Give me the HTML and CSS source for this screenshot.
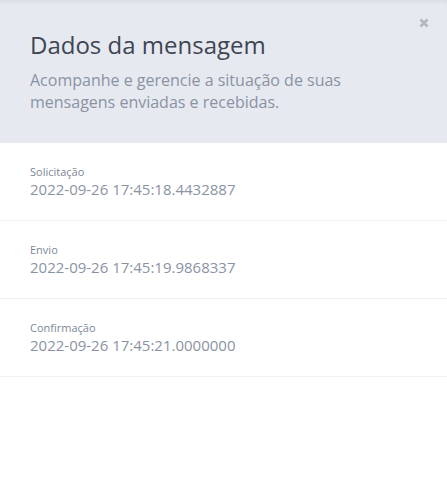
FILE: index.html
```html
<!DOCTYPE html>
<html lang="pt-BR">
<head>
<meta charset="utf-8">
<title>Dados da mensagem</title>
<link rel="stylesheet" href="styles.css">
</head>
<body>
<div class="panel">
  <header class="header">
    <button class="close" aria-label="Fechar">
      <svg width="10" height="10" viewBox="0 0 10 10"><path d="M1.5 1.5 L8.5 8.5 M8.5 1.5 L1.5 8.5" stroke="#b2b6bf" stroke-width="2.6" stroke-linecap="butt"/></svg>
    </button>
    <h1 class="title">Dados da mensagem</h1>
    <p class="subtitle">Acompanhe e gerencie a situação de suas mensagens enviadas e recebidas.</p>
  </header>
  <div class="rows">
    <div class="row">
      <div class="label">Solicitação</div>
      <div class="value">2022-09-26 17:45:18.4432887</div>
    </div>
    <div class="row">
      <div class="label">Envio</div>
      <div class="value">2022-09-26 17:45:19.9868337</div>
    </div>
    <div class="row">
      <div class="label">Confirmação</div>
      <div class="value">2022-09-26 17:45:21.0000000</div>
    </div>
  </div>
</div>
</body>
</html>
```
FILE: styles.css
```css
* { box-sizing: border-box; }
html, body { margin: 0; padding: 0; background: #fff; }
body { font-family: "Open Sans", "Noto Sans", sans-serif; }
.panel { width: 447px; min-height: 483px; background: #fff; }
.header {
  position: relative;
  background: #e6e9f0;
  padding: 29px 30px 29px 30px;
  box-shadow: inset 0 4px 4px -2px rgba(0,0,0,0.06);
}
.close {
  position: absolute;
  top: 18px;
  right: 18px;
  border: 0;
  background: transparent;
  padding: 0;
  width: 10px;
  height: 10px;
  line-height: 0;
  cursor: pointer;
}
.title {
  margin: 0;
  font-size: 24px;
  font-weight: 400;
  line-height: 32px;
  color: #3e4553;
}
.subtitle {
  margin: 8px 0 0 0;
  font-size: 16px;
  line-height: 22.4px;
  color: #8a93a3;
  max-width: 330px;
}
.row {
  padding: 21px 30px 20px 30px;
  border-bottom: 1px solid #eef0f4;
}
.label {
  font-size: 11px;
  line-height: 15px;
  color: #7e8797;
}
.value {
  font-size: 15px;
  line-height: 21px;
  color: #8a93a3;
}
```
